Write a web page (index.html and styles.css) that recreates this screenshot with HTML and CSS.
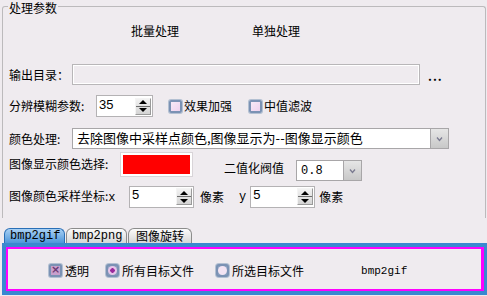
FILE: index.html
```html
<!DOCTYPE html>
<html lang="zh-CN">
<head>
    <meta charset="UTF-8">
    <title>处理参数</title>
    <link rel="stylesheet" href="styles.css">
</head>
<body>
    <div class="group">
        <span class="legend">处理参数</span>
        <div class="modes">
            <span>批量处理</span>
            <span>单独处理</span>
        </div>
        <!-- 输出目录 -->
        <div class="row row-out">
            <span class="label lw63">输出目录：</span>
            <span class="path"></span>
            <span class="more">...</span>
        </div>
        <!-- 模糊参数 -->
        <div class="row row-blur">
            <span class="label lw87">分辨模糊参数:</span>
            <span class="spin w57">
                <span class="val">35</span>
                <span class="spin-btn"><i class="up"></i><i class="down"></i></span>
            </span>
            <span class="check ml16"></span><span class="ctext">效果加强</span>
            <span class="check ml17"></span><span class="ctext">中值滤波</span>
        </div>
        <!-- 颜色处理 -->
        <div class="row row-color">
            <span class="label lw63">颜色处理:</span>
            <span class="combo w377">
                <span class="combo-text">去除图像中采样点颜色,图像显示为--图像显示颜色</span>
                <span class="combo-btn"><svg width="9" height="6" viewBox="0 0 9 6"><polyline points="2,1.5 4.5,4.5 7,1.5" fill="none" stroke="#7a7a90" stroke-width="1.3"/></svg></span>
            </span>
        </div>
        <!-- 显示颜色 / 阀值 -->
        <div class="row row-disp">
            <span class="label lw112 mt4">图像显示颜色选择:</span>
            <span class="swatch"></span>
            <span class="label mt8 ml32">二值化阀值</span>
            <span class="combo w66 mt7 ml12">
                <span class="combo-text mono">0.8</span>
                <span class="combo-btn"><svg width="9" height="6" viewBox="0 0 9 6"><polyline points="2,1.5 4.5,4.5 7,1.5" fill="none" stroke="#7a7a90" stroke-width="1.3"/></svg></span>
            </span>
        </div>
        <!-- 采样坐标 -->
        <div class="row row-coords">
            <span class="label lw120">图像颜色采样坐标:<span class="mono">x</span></span>
            <span class="spin w65">
                <span class="val">5</span>
                <span class="spin-btn"><i class="up"></i><i class="down"></i></span>
            </span>
            <span class="label ml6">像素</span>
            <span class="label ml15 mono">y</span>
            <span class="spin w65 ml4">
                <span class="val">5</span>
                <span class="spin-btn"><i class="up"></i><i class="down"></i></span>
            </span>
            <span class="label ml4">像素</span>
        </div>
    </div>

    <div class="tabs">
        <span class="tab active">bmp2gif</span>
        <span class="tab">bmp2png</span>
        <span class="tab cjk">图像旋转</span>
    </div>
    <div class="panel">
        <div class="panel-inner">
            <span class="check checked ml41"></span><span class="ptext">透明</span>
            <span class="radio on ml17"></span><span class="ptext">所有目标文件</span>
            <span class="radio ml22"></span><span class="ptext">所选目标文件</span>
            <span class="mono small ml57">bmp2gif</span>
        </div>
    </div>
</body>
</html>
```

FILE: styles.css
```css
body {
    margin: 0;
    width: 487px;
    height: 296px;
    overflow: hidden;
    background-color: #efebef;
    font-family: "Noto Sans CJK SC", "Liberation Sans", sans-serif;
    font-size: 12px;
    line-height: 14px;
    color: #000;
}
.mono {
    font-family: "Liberation Mono", "Noto Sans CJK SC", monospace;
}
.small {
    font-size: 11px;
}

/* group box */
.group {
    position: relative;
    margin: 6px 1px 0 2px;
    padding: 0 0 10px 0;
    border: 1px solid #bcbabc;
    border-bottom: none;
    border-radius: 3px 3px 0 0;
}
.legend {
    position: absolute;
    left: 5px;
    top: -6px;
    padding: 0 1px;
    line-height: 13px;
    background-color: #efebef;
}
.modes {
    margin-top: 17px;
    height: 14px;
    padding-left: 128px;
    display: flex;
    gap: 73px;
}
.row {
    display: flex;
    align-items: center;
    padding-left: 6px;
}
.label {
    white-space: nowrap;
    flex-shrink: 0;
}
.lw63 { width: 63px; }
.lw87 { width: 87px; }
.lw112 { width: 112px; }
.lw120 { width: 120px; }
.ml4 { margin-left: 4px; }
.ml6 { margin-left: 6px; }
.ml12 { margin-left: 12px; }
.ml15 { margin-left: 15px; }
.ml16 { margin-left: 16px; }
.ml17 { margin-left: 17px; }
.ml22 { margin-left: 22px; }
.ml32 { margin-left: 32px; }
.ml41 { margin-left: 41px; }
.ml57 { margin-left: 57px; }
.mt4 { margin-top: 4px; }
.mt7 { margin-top: 7px; }
.mt8 { margin-top: 8px; }

.row-out {
    margin-top: 26px;
    height: 21px;
}
.path {
    width: 348px;
    height: 21px;
    box-sizing: border-box;
    border: 1px solid #b8b6b8;
    box-shadow: inset 1px 1px 0 #fff, inset -1px -1px 0 #fff;
    background-color: #efebef;
}
.more {
    margin-left: 8px;
    letter-spacing: 1px;
    font-weight: bold;
    line-height: 10px;
    margin-top: 2px;
}

.row-blur {
    margin-top: 10px;
    height: 22px;
}
.row-color {
    margin-top: 11px;
    height: 21px;
}
.row-disp {
    margin-top: 4px;
    height: 29px;
    align-items: flex-start;
}
.row-coords {
    margin-top: 3px;
    height: 23px;
}

/* spin box */
.spin {
    display: flex;
    align-items: center;
    justify-content: space-between;
    height: 22px;
    box-sizing: border-box;
    border: 1px solid #b4b2b4;
    background-color: #fff;
    padding: 0 1px 0 2px;
    font-family: "Liberation Sans", sans-serif;
    font-size: 13px;
}
.w57 { width: 57px; }
.w65 { width: 65px; }
.val {
    margin-top: -3px;
}
.spin-btn {
    display: flex;
    flex-direction: column;
    width: 16px;
    height: 17px;
    box-sizing: border-box;
    border: 1px solid #9a9a9a;
    border-top-color: #f4f4f4;
    border-left-color: #f4f4f4;
    background: linear-gradient(#f2f2f2, #d4d4d4);
}
.spin-btn i {
    flex: 1;
    display: flex;
    align-items: center;
    justify-content: center;
}
.spin-btn i.up {
    border-bottom: 1px solid #6e6e6e;
}
.spin-btn i.up::after {
    content: "";
    border-left: 4px solid transparent;
    border-right: 4px solid transparent;
    border-bottom: 4px solid #000;
}
.spin-btn i.down::after {
    content: "";
    border-left: 4px solid transparent;
    border-right: 4px solid transparent;
    border-top: 4px solid #000;
}

/* check + radio */
.check,
.radio {
    display: inline-block;
    flex-shrink: 0;
    width: 9px;
    height: 9px;
    border: 2px solid #7b92b4;
    border-radius: 2px;
    background: linear-gradient(135deg, #f7eaf7, #eed2ee);
    box-shadow: 0 0 0 1px #b3c0d2;
}
.checked {
    background: #c9a0cc;
    position: relative;
}
.checked::after {
    content: "×";
    position: absolute;
    left: 0;
    top: -3px;
    width: 9px;
    text-align: center;
    font-size: 11px;
    font-weight: bold;
    color: #6c3a74;
    font-family: "DejaVu Sans", sans-serif;
}
.radio {
    border-radius: 3px;
    background: #8aa0bf;
    position: relative;
}
.radio::after {
    content: "";
    position: absolute;
    left: 0;
    top: 0;
    width: 9px;
    height: 9px;
    border-radius: 50%;
    background: #f3e4f3;
}
.radio.on::after {
    background: radial-gradient(circle, #9a2a9c 0 2px, #e7c5e9 2.5px);
}
.ctext {
    margin-left: 2px;
    white-space: nowrap;
}
.ptext {
    margin-left: 3px;
    white-space: nowrap;
}

/* combo */
.combo {
    display: flex;
    height: 21px;
    box-sizing: border-box;
}
.w377 { width: 377px; }
.w66 { width: 66px; }
.combo-text {
    flex: 1;
    box-sizing: border-box;
    border: 1px solid #a8a6a8;
    box-shadow: inset 1px 1px 0 #fff;
    background-color: #fff;
    padding: 2px 3px 0 4px;
    white-space: nowrap;
    overflow: hidden;
    font-size: 13px;
}
.combo-text.mono {
    font-size: 12px;
    padding-top: 3px;
}
.combo-btn {
    width: 18px;
    box-sizing: border-box;
    border: 1px solid #a8a6a8;
    border-left: none;
    background: linear-gradient(#e6e6e6, #c8c8c8);
    display: flex;
    align-items: center;
    justify-content: center;
}

.swatch {
    width: 71px;
    height: 23px;
    box-sizing: border-box;
    border: 2px solid #fff;
    outline: 1px solid #d8d4d8;
    background-color: #ff0000;
}

/* tabs */
.tabs {
    display: flex;
    gap: 1px;
    margin-top: 10px;
    padding-left: 4px;
    height: 15px;
}
.tab {
    box-sizing: border-box;
    height: 15px;
    padding: 0 5px;
    border: 1px solid #8c8c8c;
    border-bottom: none;
    border-radius: 6px 6px 0 0;
    background: linear-gradient(#fbfbfb, #d6d6d6);
    font-family: "Liberation Mono", monospace;
    font-size: 12px;
    line-height: 14px;
    width: 61px;
    text-align: center;
}
.tab.cjk {
    font-family: "Noto Sans CJK SC", sans-serif;
    width: 64px;
}
.tab.active {
    border-color: #2a6fb6;
    background: linear-gradient(#a8d0f4, #4d96da);
}

/* panel */
.panel {
    margin-left: 2px;
    border: 4px solid #3a88d0;
    border-right-width: 3px;
}
.panel-inner {
    display: flex;
    align-items: center;
    padding-top: 3px;
    box-sizing: border-box;
    border: 2px solid #ff00ff;
    border-right-width: 3px;
    height: 44px;
}
```
